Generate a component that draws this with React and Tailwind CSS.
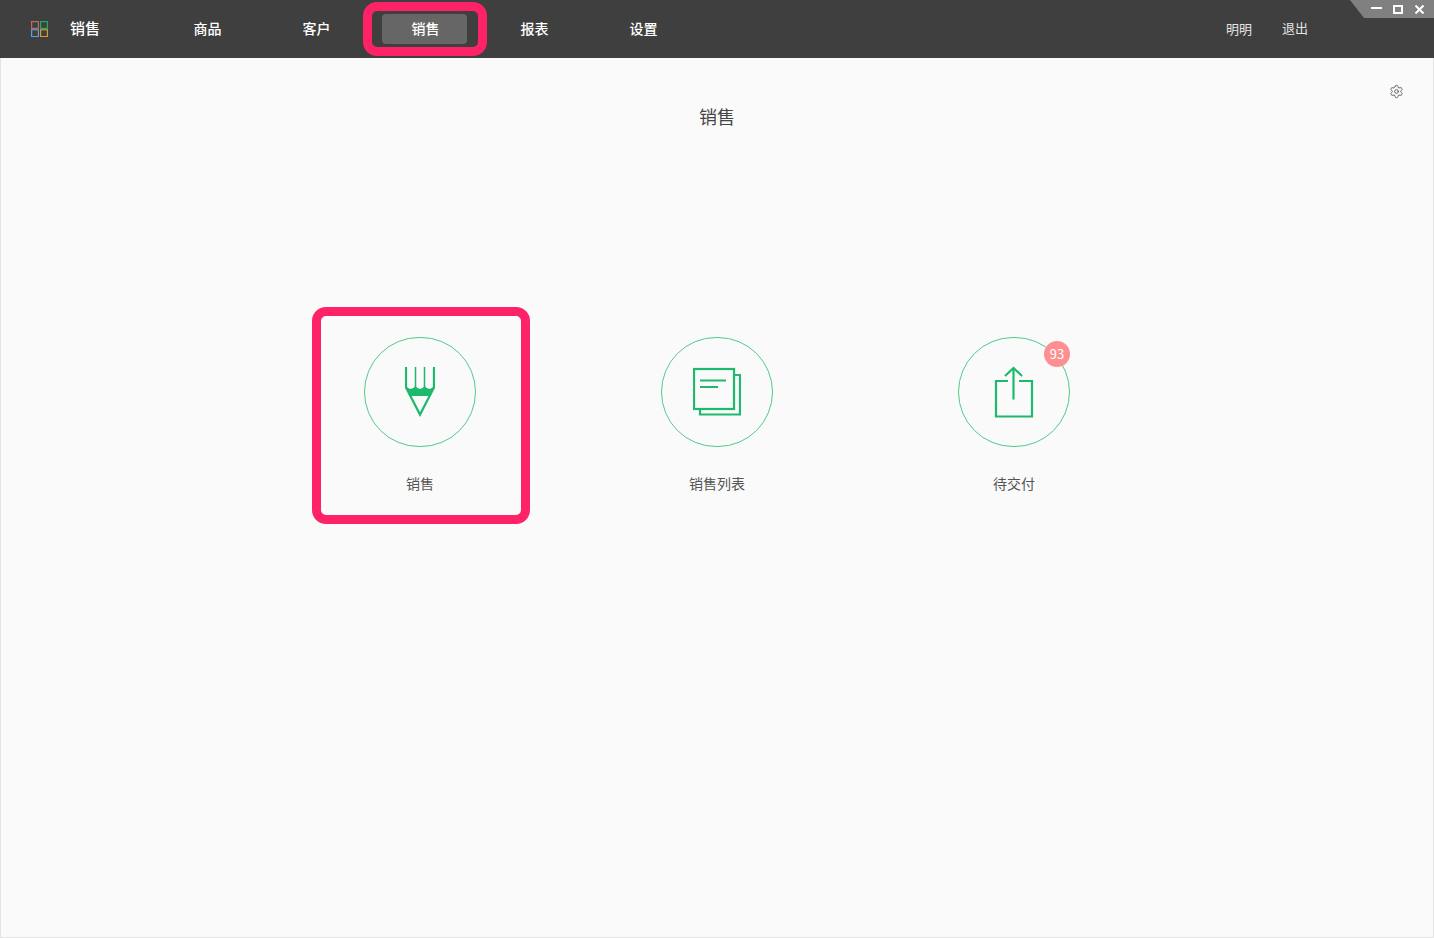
import React from "react";
import { Settings } from "lucide-react";

const navItems = ["商品", "客户", "销售", "报表", "设置"];

function Logo() {
  return (
    <svg width="17" height="16" viewBox="0 0 17 16" fill="none" strokeWidth="1.200">
      <rect x="0.600" y="0.600" width="6.800" height="6.800" stroke="#c4695f" />
      <rect x="9.600" y="0.600" width="6.800" height="6.800" stroke="#1fa971" />
      <rect x="0.600" y="8.800" width="6.800" height="6.800" stroke="#5aa0d0" />
      <rect x="9.600" y="8.800" width="6.800" height="6.800" stroke="#d8982c" />
    </svg>
  );
}

function PencilIcon() {
  return (
    <svg width="30" height="50" viewBox="0 0 30 50" fill="none">
      <path d="M1 0v20.500L15 47.500 29 20.500V0" stroke="#1db96c" strokeWidth="2.200" />
      <path d="M10.500 0v20M19.500 0v20" stroke="#1db96c" strokeWidth="1.500" />
      <path d="M1 19Q5.500 25 10.500 19 15 25 19.500 19 24.500 25 29 19L25 29H5z" fill="#1db96c" />
    </svg>
  );
}

function ListIcon() {
  return (
    <svg width="48" height="50" viewBox="0 0 48 50" fill="none" stroke="#1db96c" strokeWidth="2.200">
      <rect x="1" y="2" width="40" height="40" />
      <path d="M41 8h6v39.500H7V42" />
      <path d="M7 13.500h26M7 20h18" />
    </svg>
  );
}

function ShareIcon() {
  return (
    <svg width="40" height="52" viewBox="0 0 40 52" fill="none" stroke="#1db96c" strokeWidth="2.200">
      <path d="M14 15H2v35.500h36V15H25" />
      <path d="M19.500 33.500V2" />
      <path d="M11 10l8.500-8L28 10" />
    </svg>
  );
}

const cards = [
  { label: "销售", icon: <PencilIcon />, marked: true },
  { label: "销售列表", icon: <ListIcon /> },
  { label: "待交付", icon: <ShareIcon />, badge: 93 },
];

export default function App() {
  return (
    <div className="flex flex-col w-full h-[938px] bg-[#fafafa] overflow-hidden font-['Noto_Sans_CJK_SC','Noto_Sans',sans-serif]">
      <header className="relative flex items-center h-[58px] shrink-0 bg-[#3f3f3f] text-white text-sm">
        <div className="ml-[31px]">
          <Logo />
        </div>
        <span className="w-[83px] ml-[22px] pb-0.5 text-[15px] font-medium">销售</span>
        <nav className="flex">
          {navItems.map((item) => (
            <div key={item} className="relative flex justify-center items-center w-[109px] h-[30px] pb-0.5 font-medium">
              {item === "销售" && (
                <>
                  <div className="absolute inset-y-0 left-[11px] w-[85px] rounded-sm bg-[#666666]"></div>
                  <div className="absolute top-[-12px] left-[-8px] w-[124px] h-[54px] rounded-[14px] border-[9px] border-[#fd2366]"></div>
                </>
              )}
              <span className="relative">{item}</span>
            </div>
          ))}
        </nav>
        <div className="flex items-center gap-[30px] ml-auto mr-[126px] text-[13px] text-[#e4e4e4]">
          <span>明明</span>
          <span className="pb-0.5">退出</span>
        </div>
        <div className="absolute top-0 right-0 flex items-center w-[84px] h-[18px] pl-[21px] bg-[#808080] [clip-path:polygon(0_0,100%_0,100%_100%,14px_100%)]">
          <span className="w-[11px] h-0.5 mb-0.5 bg-white"></span>
          <span className="w-[10px] h-[9px] ml-[11px] mt-px border-2 border-white"></span>
          <svg className="ml-3 mt-px" width="9" height="9" viewBox="0 0 9 9" stroke="white" strokeWidth="2">
            <path d="M0.500 0.500l8 8M8.500 0.500l-8 8" />
          </svg>
        </div>
      </header>

      <main className="relative flex flex-col items-center flex-1 border-x border-b border-[#e4e4e4]">
        <Settings className="absolute top-[26px] right-[29px] text-[#444444]" size={15} strokeWidth={1.25} />
        <h1 className="mt-[45px] text-lg leading-[26px] text-[#444444]">销售</h1>
        <div className="flex mt-[207px]">
          {cards.map((card) => (
            <div key={card.label} className="relative flex flex-col items-center w-[297px]">
              {card.marked && (
                <div className="absolute top-[-29px] left-[40.500px] w-[218px] h-[217px] rounded-[14px] border-[9px] border-[#fd2366]"></div>
              )}
              <div className="relative flex justify-center items-center w-[112px] h-[110px] mt-px rounded-full border border-[#52c98d]">
                {card.icon}
                {card.badge && (
                  <span className="absolute top-[3px] right-[-1px] flex justify-center items-center w-[26px] h-[26px] pb-px rounded-full bg-[#fd8f92] text-[13px] text-white">
                    {card.badge}
                  </span>
                )}
              </div>
              <span className="mt-[26px] text-sm leading-5 text-[#555555]">{card.label}</span>
            </div>
          ))}
        </div>
      </main>
    </div>
  );
}
